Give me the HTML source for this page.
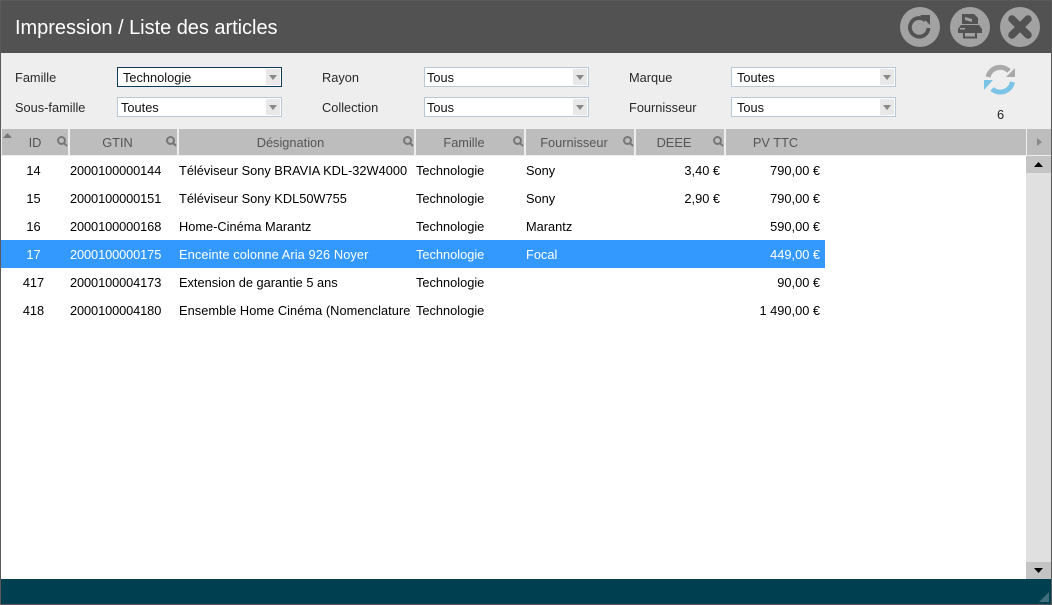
<!DOCTYPE html>
<html><head><meta charset="utf-8"><style>
html,body{margin:0;padding:0}
body{width:1052px;height:605px;position:relative;overflow:hidden;background:#eee;font-family:"Liberation Sans",sans-serif;font-size:12.8px;color:#000}
div{position:absolute;box-sizing:border-box;white-space:nowrap}
.lb{color:#2a2a2a;height:16px;line-height:16px}
.sel{width:165px;height:20px;background:#fff;border:1px solid #b9c8d6;line-height:19px;padding-left:3px;color:#111}
.sel i{position:absolute;right:1px;top:1px;width:14px;height:16px;background:#e8e8e8}
.sel i:after{content:"";position:absolute;left:3px;top:6px;border:4px solid transparent;border-top:5px solid #888;border-bottom:0}
.h{top:129px;height:26px;background:#bdbdbd;color:#555;text-align:center;line-height:27px}
.s{padding-right:12px}
.h svg{position:absolute;top:6px;right:0}
.c{height:28px;line-height:29px;overflow:hidden}
.r{text-align:right}
.n{left:70px;letter-spacing:-.1px}
.i{left:2px;width:63px;text-align:center}
.b{width:40px;height:40px;top:7px;border-radius:50%;background:#a2a2a2}
</style></head><body>
<div style="left:0;top:0;width:1052px;height:53px;background:#525252"></div>
<div style="left:15px;top:15px;color:#fff;font-size:20px;line-height:26px;letter-spacing:-.03px">Impression / Liste des articles</div>
<div class="b" style="left:900px"><svg width="40" height="40" viewBox="0 0 40 40"><path d="M25.500 13.500A9.300 9.300 0 1 0 28.500 21" fill="none" stroke="#525252" stroke-width="3.800"/><path d="M20 8H30V18Z" fill="#525252"/></svg></div>
<div class="b" style="left:950px"><svg width="40" height="40" viewBox="0 0 40 40"><path d="M12 7H24L28 11V17H12Z" fill="#525252"/><path d="M15 10L22 12V15L15 13Z" fill="#a2a2a2"/><path d="M11 18H29L32 22V26H8V22Z" fill="#525252"/><rect x="10" y="21" width="5" height="1.500" fill="#a2a2a2"/><path d="M14 26V30.500H26V26" fill="none" stroke="#525252" stroke-width="2"/></svg></div>
<div class="b" style="left:1000px"><svg width="40" height="40" viewBox="0 0 40 40"><path d="M12 12L28 28M28 12L12 28" stroke="#525252" stroke-width="7.500" stroke-linecap="round"/></svg></div>

<div class="lb" style="left:15px;top:70px">Famille</div>
<div class="lb" style="left:15px;top:100px">Sous-famille</div>
<div class="lb" style="left:322px;top:70px">Rayon</div>
<div class="lb" style="left:322px;top:100px">Collection</div>
<div class="lb" style="left:629px;top:70px">Marque</div>
<div class="lb" style="left:629px;top:100px">Fournisseur</div>
<div class="sel" style="left:117px;top:67px;border-color:#0f3a55;padding-left:5px">Technologie<i></i></div>
<div class="sel" style="left:117px;top:97px">Toutes<i></i></div>
<div class="sel" style="left:424px;top:67px;padding-left:2px">Tous<i></i></div>
<div class="sel" style="left:424px;top:97px;padding-left:2px">Tous<i></i></div>
<div class="sel" style="left:731px;top:67px;padding-left:5px">Toutes<i></i></div>
<div class="sel" style="left:731px;top:97px;padding-left:5px">Tous<i></i></div>
<svg style="position:absolute;left:982px;top:62px" width="36" height="36" viewBox="0 0 36 36"><path d="M6 15A12.500 12.500 0 0 1 27 9" fill="none" stroke="#a9a9a9" stroke-width="5"/><path d="M24 15H33V6Z" fill="#a9a9a9"/><path d="M30.500 20A12.500 12.500 0 0 1 10 27" fill="none" stroke="#7cc4e6" stroke-width="5"/><path d="M2 18H11L2 28Z" fill="#7cc4e6"/></svg>
<div style="left:980px;top:107px;width:41px;text-align:center;line-height:15px;color:#222">6</div>

<div style="left:1px;top:156px;width:1025px;height:423px;background:#fff"></div>
<svg width="0" height="0" style="position:absolute"><defs><g id="m"><circle cx="5.500" cy="5.500" r="3.500" fill="none" stroke="#777" stroke-width="2"/><path d="M8 8L11 11" stroke="#777" stroke-width="2"/></g></defs></svg>
<div class="h" style="left:2px;width:66px">ID<svg width="12" height="12"><use href="#m"/></svg><svg width="10" height="7" style="left:1px;top:3px"><path d="M0 6L4.500 1L9 6Z" fill="#777"/></svg></div>
<div class="h s" style="left:70px;width:107px">GTIN<svg width="12" height="12"><use href="#m"/></svg></div>
<div class="h s" style="left:179px;width:235px">Désignation<svg width="12" height="12"><use href="#m"/></svg></div>
<div class="h s" style="left:416px;width:108px">Famille<svg width="12" height="12"><use href="#m"/></svg></div>
<div class="h s" style="left:526px;width:108px">Fournisseur<svg width="12" height="12"><use href="#m"/></svg></div>
<div class="h s" style="left:636px;width:88px">DEEE<svg width="12" height="12"><use href="#m"/></svg></div>
<div class="h" style="left:726px;width:99px">PV TTC</div>
<div class="h" style="left:825px;width:201px"></div>
<div class="h" style="left:1027px;width:24px"><svg width="6" height="8" style="left:10px;top:9px"><path d="M0 0L5 4L0 8Z" fill="#888"/></svg></div>
<div style="left:1px;top:240px;width:824px;height:28px;background:#3399ff"></div>

<div class="c i" style="top:156px">14</div><div class="c n" style="top:156px">2000100000144</div><div class="c" style="left:179px;top:156px;width:232px">Téléviseur Sony BRAVIA KDL-32W4000</div><div class="c" style="left:416px;top:156px">Technologie</div><div class="c" style="left:526px;top:156px">Sony</div><div class="c r" style="left:636px;top:156px;width:84px">3,40 €</div><div class="c r" style="left:726px;top:156px;width:94px">790,00 €</div>
<div class="c i" style="top:184px">15</div><div class="c n" style="top:184px">2000100000151</div><div class="c" style="left:179px;top:184px;width:232px">Téléviseur Sony KDL50W755</div><div class="c" style="left:416px;top:184px">Technologie</div><div class="c" style="left:526px;top:184px">Sony</div><div class="c r" style="left:636px;top:184px;width:84px">2,90 €</div><div class="c r" style="left:726px;top:184px;width:94px">790,00 €</div>
<div class="c i" style="top:212px">16</div><div class="c n" style="top:212px">2000100000168</div><div class="c" style="left:179px;top:212px;width:232px">Home-Cinéma Marantz</div><div class="c" style="left:416px;top:212px">Technologie</div><div class="c" style="left:526px;top:212px">Marantz</div><div class="c r" style="left:726px;top:212px;width:94px">590,00 €</div>
<div class="c i" style="color:#fff;top:240px">17</div><div class="c n" style="color:#fff;top:240px">2000100000175</div><div class="c" style="color:#fff;left:179px;top:240px;width:232px;letter-spacing:.1px">Enceinte colonne Aria 926 Noyer</div><div class="c" style="color:#fff;left:416px;top:240px">Technologie</div><div class="c" style="color:#fff;left:526px;top:240px">Focal</div><div class="c r" style="color:#fff;left:726px;top:240px;width:94px">449,00 €</div>
<div class="c i" style="top:268px">417</div><div class="c n" style="top:268px">2000100004173</div><div class="c" style="left:179px;top:268px;width:232px">Extension de garantie 5 ans</div><div class="c" style="left:416px;top:268px">Technologie</div><div class="c r" style="left:726px;top:268px;width:94px">90,00 €</div>
<div class="c i" style="top:296px">418</div><div class="c n" style="top:296px">2000100004180</div><div class="c" style="left:179px;top:296px;width:232px;letter-spacing:.05px">Ensemble Home Cinéma (Nomenclature)</div><div class="c" style="left:416px;top:296px">Technologie</div><div class="c r" style="left:726px;top:296px;width:94px">1 490,00 €</div>

<div style="left:1026px;top:156px;width:25px;height:423px;background:#e0e0e0"></div>
<div style="left:1026px;top:156px;width:25px;height:17px;background:#c4c4c4"><svg width="25" height="17" style="position:absolute"><path d="M8 11L12.500 6L17 11Z" fill="#000"/></svg></div>
<div style="left:1026px;top:562px;width:25px;height:17px;background:#c4c4c4"><svg width="25" height="17" style="position:absolute"><path d="M8 6L12.500 11L17 6Z" fill="#000"/></svg></div>
<div style="left:0;top:579px;width:1052px;height:26px;background:#003f4f"></div>
<svg style="position:absolute;left:1038px;top:591px" width="12" height="12"><path d="M11 1V11H1ZM11 5L5 11" fill="#3f6f7c"/></svg>
<div style="left:0;top:0;width:1052px;height:605px;border:1px solid #5a5a5a"></div>
</body></html>
